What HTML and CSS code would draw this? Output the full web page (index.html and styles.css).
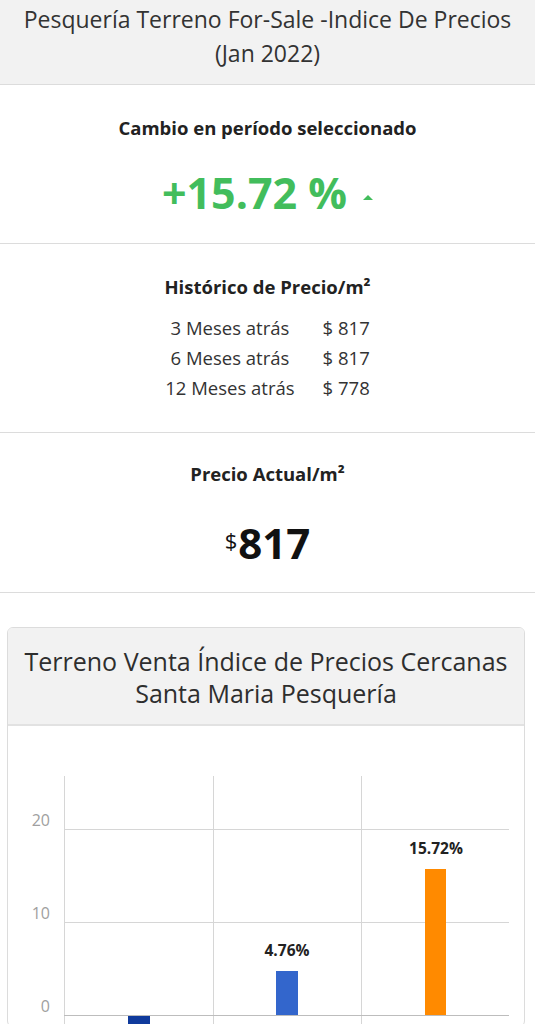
FILE: index.html
```html
<!DOCTYPE html>
<html lang="es">
<head>
    <meta charset="UTF-8">
    <meta name="viewport" content="width=device-width, initial-scale=1.0">
    <title>Pesquería Terreno - Indice De Precios</title>
    <link rel="stylesheet" href="styles.css">
</head>
<body>
    <div class="page-head">
        Pesquería Terreno For-Sale -Indice De Precios<br>(Jan 2022)
    </div>

    <div class="block">
        <div class="block-title">Cambio en período seleccionado</div>
        <div class="change">+15.72 %<span class="caret"></span></div>
    </div>

    <div class="block block-hist">
        <div class="block-title">Histórico de Precio/m²</div>
        <table class="hist">
            <tr><td>3 Meses atrás</td><td>$ 817</td></tr>
            <tr><td>6 Meses atrás</td><td>$ 817</td></tr>
            <tr><td>12 Meses atrás</td><td>$ 778</td></tr>
        </table>
    </div>

    <div class="block block-price">
        <div class="block-title">Precio Actual/m²</div>
        <div class="price"><span class="cur">$</span>817</div>
    </div>

    <div class="card">
        <div class="card-head">Terreno Venta Índice de Precios Cercanas<br>Santa Maria Pesquería</div>
        <div class="card-body">
            <svg class="chart" width="516" height="300" viewBox="0 0 516 300">
                <g stroke="#d6d6d6" stroke-width="1">
                    <line x1="56.5" y1="50" x2="56.5" y2="300"/>
                    <line x1="205.5" y1="50" x2="205.5" y2="300"/>
                    <line x1="353.5" y1="50" x2="353.5" y2="300"/>
                    <line x1="56" y1="103.5" x2="501" y2="103.5"/>
                    <line x1="56" y1="196.5" x2="501" y2="196.5"/>
                </g>
                <line x1="56" y1="289.5" x2="501" y2="289.5" stroke="#bdbdbd" stroke-width="1"/>
                <g class="axis" text-anchor="end">
                    <text x="42" y="100">20</text>
                    <text x="42" y="193">10</text>
                    <text x="42" y="286">0</text>
                </g>
                <rect x="120" y="290" width="22" height="20" fill="#0f3a9c"/>
                <rect x="268" y="245" width="22" height="44" fill="#3366cc"/>
                <rect x="417" y="143" width="21" height="146" fill="#ff8a00"/>
                <g class="bar-label" text-anchor="middle">
                    <text x="279" y="230">4.76%</text>
                    <text x="428" y="128">15.72%</text>
                </g>
            </svg>
        </div>
    </div>
</body>
</html>
```

FILE: styles.css
```css
body {
    margin: 0;
    font-family: "Open Sans", Arial, sans-serif;
    color: #333;
    background-color: #fff;
}

.page-head {
    background-color: #f2f2f2;
    border-bottom: 1px solid #dcdcdc;
    text-align: center;
    font-size: 23px;
    line-height: 34px;
    padding: 2px 6px 14px;
}

.block {
    border-bottom: 1px solid #dcdcdc;
    text-align: center;
    padding: 31px 10px 25px;
}

.block-title {
    font-size: 18.5px;
    font-weight: 700;
    line-height: 24px;
    color: #222;
}

.change {
    margin-top: 28px;
    font-size: 43px;
    font-weight: 700;
    line-height: 50px;
    color: #42bd5c;
}

.caret {
    display: inline-block;
    width: 0;
    height: 0;
    margin-left: 16px;
    vertical-align: middle;
    border-left: 5px solid transparent;
    border-right: 5px solid transparent;
    border-bottom: 5px solid #42bd5c;
}

.block-hist {
    padding-bottom: 29px;
}

.hist {
    margin: 14px auto 0;
    border-collapse: collapse;
    font-size: 18.5px;
    color: #333;
}

.hist td {
    padding: 0 14px;
    line-height: 30px;
    text-align: center;
}

.block-price {
    padding-top: 29px;
    padding-bottom: 24px;
}

.price {
    margin-top: 29px;
    font-size: 42px;
    font-weight: 700;
    line-height: 50px;
    color: #111;
}

.price .cur {
    font-size: 22px;
    font-weight: 400;
    vertical-align: 10px;
    margin-right: 1px;
}

.card {
    margin: 34px 10px 0 7px;
    border: 1px solid #dcdcdc;
    border-radius: 6px;
    overflow: hidden;
}

.card-head {
    background-color: #f2f2f2;
    border-bottom: 2px solid #e2e2e2;
    text-align: center;
    font-size: 25px;
    line-height: 32px;
    padding: 17px 4px 15px;
    color: #2e2e2e;
}

.card-body {
    height: 300px;
}

.chart {
    display: block;
}

.axis text {
    font-family: "Open Sans", Arial, sans-serif;
    font-size: 16px;
    fill: #a0a0a0;
}

.bar-label text {
    font-family: "Open Sans", Arial, sans-serif;
    font-size: 15.5px;
    font-weight: 700;
    fill: #222;
}
```
